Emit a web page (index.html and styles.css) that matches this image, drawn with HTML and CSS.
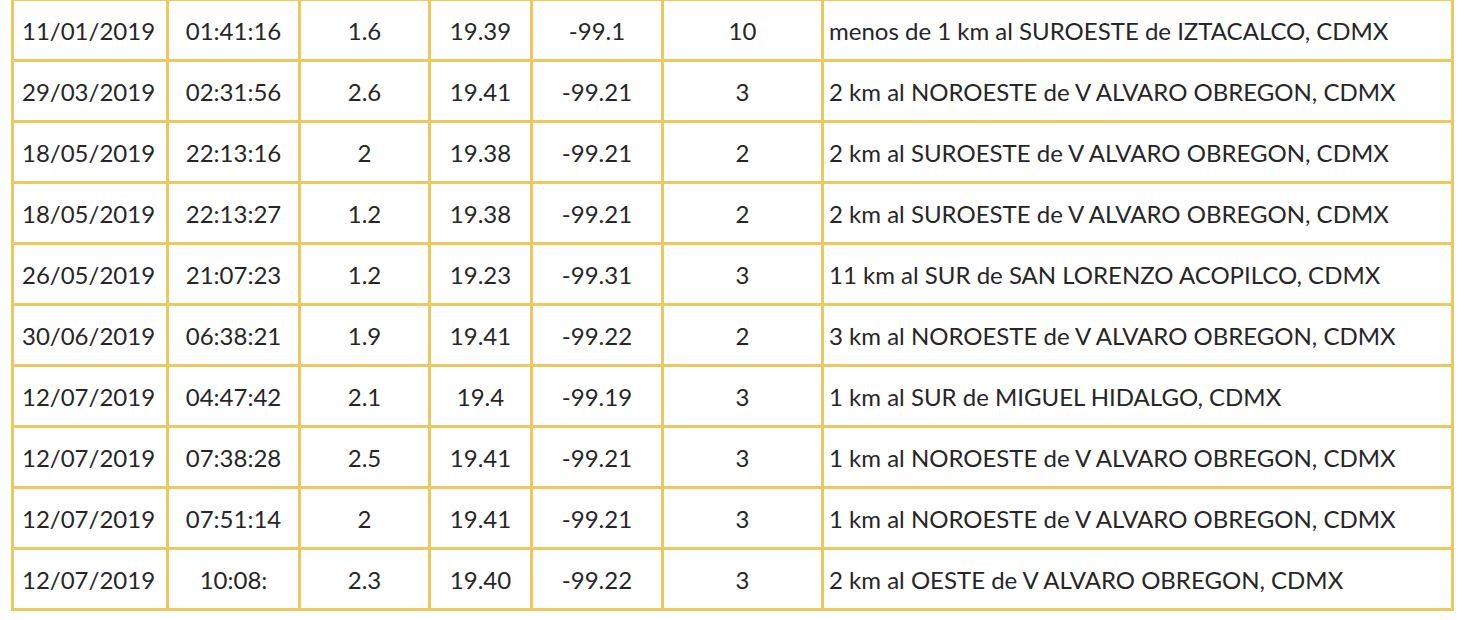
FILE: index.html
```html
<!DOCTYPE html>
<html lang="es">
<head>
<meta charset="utf-8">
<title>Sismos CDMX</title>
<link rel="stylesheet" href="styles.css">
</head>
<body>
<div class="wrap">
<table class="quakes">
<colgroup>
<col class="c-date"><col class="c-time"><col class="c-mag"><col class="c-lat"><col class="c-lon"><col class="c-depth"><col class="c-ref">
</colgroup>
<tbody>
<tr><td class="date">11/01/2019</td><td>01:41:16</td><td>1.6</td><td>19.39</td><td>-99.1</td><td>10</td><td class="ref">menos de 1 km al SUROESTE de IZTACALCO, CDMX</td></tr>
<tr><td class="date">29/03/2019</td><td>02:31:56</td><td>2.6</td><td>19.41</td><td>-99.21</td><td>3</td><td class="ref">2 km al NOROESTE de V ALVARO OBREGON, CDMX</td></tr>
<tr><td class="date">18/05/2019</td><td>22:13:16</td><td>2</td><td>19.38</td><td>-99.21</td><td>2</td><td class="ref">2 km al SUROESTE de V ALVARO OBREGON, CDMX</td></tr>
<tr><td class="date">18/05/2019</td><td>22:13:27</td><td>1.2</td><td>19.38</td><td>-99.21</td><td>2</td><td class="ref">2 km al SUROESTE de V ALVARO OBREGON, CDMX</td></tr>
<tr><td class="date">26/05/2019</td><td>21:07:23</td><td>1.2</td><td>19.23</td><td>-99.31</td><td>3</td><td class="ref">11 km al SUR de SAN LORENZO ACOPILCO, CDMX</td></tr>
<tr><td class="date">30/06/2019</td><td>06:38:21</td><td>1.9</td><td>19.41</td><td>-99.22</td><td>2</td><td class="ref">3 km al NOROESTE de V ALVARO OBREGON, CDMX</td></tr>
<tr><td class="date">12/07/2019</td><td>04:47:42</td><td>2.1</td><td>19.4</td><td>-99.19</td><td>3</td><td class="ref">1 km al SUR de MIGUEL HIDALGO, CDMX</td></tr>
<tr><td class="date">12/07/2019</td><td>07:38:28</td><td>2.5</td><td>19.41</td><td>-99.21</td><td>3</td><td class="ref">1 km al NOROESTE de V ALVARO OBREGON, CDMX</td></tr>
<tr><td class="date">12/07/2019</td><td>07:51:14</td><td>2</td><td>19.41</td><td>-99.21</td><td>3</td><td class="ref">1 km al NOROESTE de V ALVARO OBREGON, CDMX</td></tr>
<tr><td class="date">12/07/2019</td><td>10:08:</td><td>2.3</td><td>19.40</td><td>-99.22</td><td>3</td><td class="ref">2 km al OESTE de V ALVARO OBREGON, CDMX</td></tr>
</tbody>
</table>
</div>
</body>
</html>
```

FILE: styles.css
```css
html, body {
  margin: 0;
  padding: 0;
  background: #ffffff;
}

.wrap {
  padding-left: 11px;
  overflow: hidden;
  height: 620px;
}

.quakes {
  margin-top: -2px;
  width: 1440px;
  table-layout: fixed;
  border-collapse: collapse;
  font-family: Lato, "Open Sans", sans-serif;
  font-size: 24px;
  color: #262626;
}

.c-date { width: 155px; }
.c-time { width: 132px; }
.c-mag { width: 130px; }
.c-lat { width: 102px; }
.c-lon { width: 131px; }
.c-depth { width: 160px; }
.c-ref { width: 630px; }

.quakes td {
  border: 3px solid #ebc95f;
  height: 56px;
  padding: 2px 4px 0;
  text-align: center;
  vertical-align: middle;
  white-space: nowrap;
  line-height: 1;
}

.quakes td.date {
  text-align: left;
  padding-left: 8px;
}

.quakes td.ref {
  text-align: left;
  padding-left: 5px;
}
```
